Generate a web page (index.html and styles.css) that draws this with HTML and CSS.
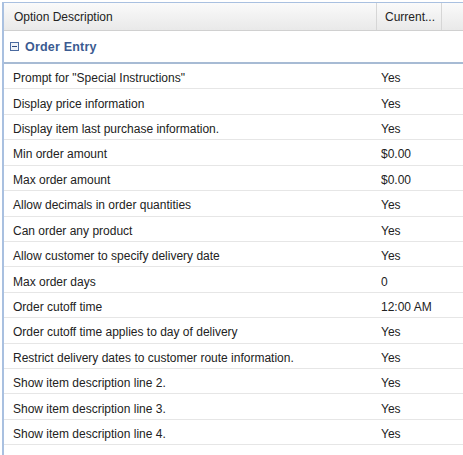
FILE: index.html
```html
<!DOCTYPE html>
<html>
<head>
<meta charset="utf-8">
<link rel="stylesheet" href="styles.css">
</head>
<body>
<div class="grid">
  <div class="head">
    <div class="hcell desc">Option Description</div>
    <div class="hcell cur">Current...</div>
    <div class="hcell rest"></div>
  </div>
  <div class="group">
    <svg class="tog" width="9" height="9" viewBox="0 0 9 9"><rect x="0.5" y="0.5" width="8" height="8" fill="#eef2f8" stroke="#4a6aa0"/><rect x="2" y="4" width="5" height="1" fill="#2c4a80"/></svg>
    <span>Order Entry</span>
  </div>
  <div class="rows">
    <div class="row"><span class="d">Prompt for "Special Instructions"</span><span class="v">Yes</span></div>
    <div class="row"><span class="d">Display price information</span><span class="v">Yes</span></div>
    <div class="row"><span class="d">Display item last purchase information.</span><span class="v">Yes</span></div>
    <div class="row"><span class="d">Min order amount</span><span class="v">$0.00</span></div>
    <div class="row"><span class="d">Max order amount</span><span class="v">$0.00</span></div>
    <div class="row"><span class="d">Allow decimals in order quantities</span><span class="v">Yes</span></div>
    <div class="row"><span class="d">Can order any product</span><span class="v">Yes</span></div>
    <div class="row"><span class="d">Allow customer to specify delivery date</span><span class="v">Yes</span></div>
    <div class="row"><span class="d">Max order days</span><span class="v">0</span></div>
    <div class="row"><span class="d">Order cutoff time</span><span class="v">12:00 AM</span></div>
    <div class="row"><span class="d">Order cutoff time applies to day of delivery</span><span class="v">Yes</span></div>
    <div class="row"><span class="d">Restrict delivery dates to customer route information.</span><span class="v">Yes</span></div>
    <div class="row"><span class="d">Show item description line 2.</span><span class="v">Yes</span></div>
    <div class="row"><span class="d">Show item description line 3.</span><span class="v">Yes</span></div>
    <div class="row"><span class="d">Show item description line 4.</span><span class="v">Yes</span></div>
  </div>
</div>
</body>
</html>
```
FILE: styles.css
```css
html, body {
  margin: 0;
  padding: 0;
  background: #ffffff;
}
body {
  width: 463px;
  height: 455px;
  overflow: hidden;
  font-family: "Liberation Sans", Arial, sans-serif;
  font-size: 12px;
  color: #222222;
}
.grid {
  margin-top: 2px;
  margin-left: 2px;
  border-left: 2px solid #a9c0e0;
  border-top: 1px solid #a9c0e0;
  height: 460px;
}
.head {
  display: flex;
  height: 27px;
  background: linear-gradient(#fafafa, #e9e9e9);
  border-bottom: 1px solid #d0d0d0;
}
.hcell {
  display: flex;
  align-items: center;
}
.desc {
  width: 372px;
  box-sizing: border-box;
  padding-left: 10px;
}
.cur {
  width: 66px;
  box-sizing: border-box;
  padding-left: 8px;
  border-left: 1px solid #d6d6d6;
  border-right: 1px solid #d6d6d6;
}
.rest {
  flex: 1;
}
.group {
  display: flex;
  align-items: center;
  gap: 6px;
  height: 33px;
  padding-left: 6px;
  border-bottom: 2px solid #a7bbd4;
  box-sizing: border-box;
  font-weight: bold;
  font-size: 12.5px;
  color: #3b5b91;
  letter-spacing: 0.2px;
}
.tog {
  display: block;
}
.rows {
  display: flex;
  flex-direction: column;
}
.row {
  display: flex;
  align-items: center;
  height: 25.43px;
  padding-top: 4px;
  box-sizing: border-box;
  border-bottom: 1px solid #e6e6e6;
}
.d {
  width: 377px;
  box-sizing: border-box;
  padding-left: 9px;
}
```
